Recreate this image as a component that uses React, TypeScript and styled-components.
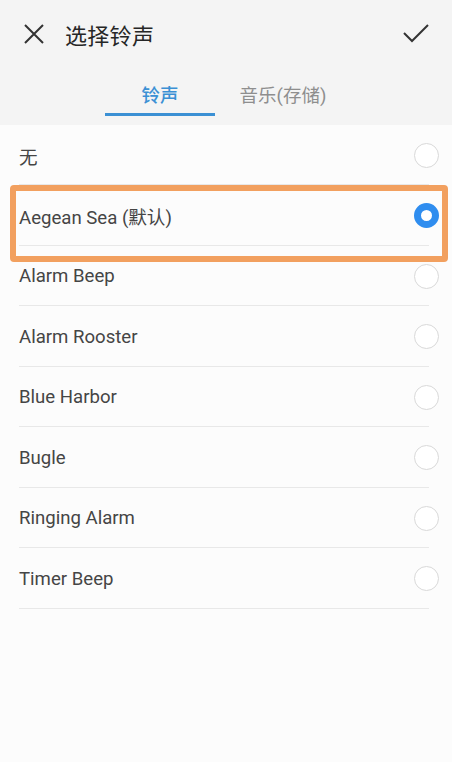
import React, { FC } from 'react'
import styled, { createGlobalStyle } from 'styled-components'

const GlobalStyle = createGlobalStyle`
  html, body {
    margin: 0;
    padding: 0;
    background: #fcfcfc;
  }
  body {
    font-family: Roboto, 'Noto Sans CJK SC', sans-serif;
  }
`

const Page = styled.div`
  width: 452px;
  height: 762px;
  background: #fcfcfc;
  overflow: hidden;
`

const Header = styled.header`
  background: #f4f4f4;
  height: 124.5px;
  display: flex;
  flex-direction: column;
`

const TopBar = styled.div`
  height: 68px;
  display: flex;
  align-items: center;
  padding: 0 22px 0 22px;
`

const Title = styled.h1`
  flex: 1;
  margin: 0 0 0 19px;
  font-size: 22px;
  font-weight: 400;
  color: #262626;
  letter-spacing: 0.3px;
`

const IconButton = styled.button`
  border: none;
  background: none;
  padding: 0;
  display: flex;
  color: #333;
`

const Tabs = styled.div`
  display: flex;
  gap: 13px;
  padding-left: 105px;
  height: 56.5px;
`

const Tab = styled.div<{ $active?: boolean }>`
  width: 110px;
  display: flex;
  flex-direction: column;
  align-items: center;
  justify-content: flex-end;
  font-size: 18.5px;
  color: ${({ $active }) => ($active ? '#3b90d4' : '#8e8e8e')};
  font-weight: ${({ $active }) => ($active ? 500 : 400)};

  &::after {
    content: '';
    display: block;
    width: 110px;
    height: 3px;
    margin-top: 6px;
    margin-bottom: 9px;
    background: ${({ $active }) => ($active ? '#3b90d4' : 'transparent')};
  }
`

const List = styled.ul`
  list-style: none;
  margin: 0;
  padding: 0;
  position: relative;
`

const Row = styled.li`
  height: 60.5px;
  padding-top: 2px;
  margin: 0 23px 0 19px;
  display: flex;
  align-items: center;
  justify-content: space-between;
  border-bottom: 1px solid #e8e8e8;
  box-sizing: border-box;
  font-size: 18.6px;
  color: #454545;
`

const Radio = styled.span<{ $checked?: boolean }>`
  width: 25px;
  height: 25px;
  margin-right: -10px;
  border-radius: 50%;
  box-sizing: border-box;
  border: ${({ $checked }) =>
    $checked ? '7px solid #2f8def' : '1.5px solid #d9d9d9'};
  background: #fff;
`

const Highlight = styled.div`
  position: absolute;
  left: 10px;
  right: 4px;
  top: 60.5px;
  height: 77px;
  border: 6px solid #f2a05f;
  border-radius: 4px;
  box-sizing: border-box;
  pointer-events: none;
`

const tones = [
  '无',
  'Aegean Sea (默认)',
  'Alarm Beep',
  'Alarm Rooster',
  'Blue Harbor',
  'Bugle',
  'Ringing Alarm',
  'Timer Beep',
]

const App: FC = () => {
  const selected = 1

  return (
    <Page>
      <GlobalStyle />
      <Header>
        <TopBar>
          <IconButton aria-label='close'>
            <svg width='24' height='24' viewBox='0 0 24 24'>
              <path
                d='M3 3 L21 21 M21 3 L3 21'
                stroke='#333'
                strokeWidth='2'
                fill='none'
              />
            </svg>
          </IconButton>
          <Title>选择铃声</Title>
          <IconButton aria-label='confirm'>
            <svg width='28' height='22' viewBox='0 0 28 22'>
              <path
                d='M2 10 L10 18 L26 2'
                stroke='#333'
                strokeWidth='2'
                fill='none'
              />
            </svg>
          </IconButton>
        </TopBar>
        <Tabs>
          <Tab $active>铃声</Tab>
          <Tab>音乐(存储)</Tab>
        </Tabs>
      </Header>
      <List>
        {tones.map((label, ind) => (
          <Row key={ind}>
            {label}
            <Radio $checked={ind === selected} />
          </Row>
        ))}
        <Highlight />
      </List>
    </Page>
  )
}

export default App
